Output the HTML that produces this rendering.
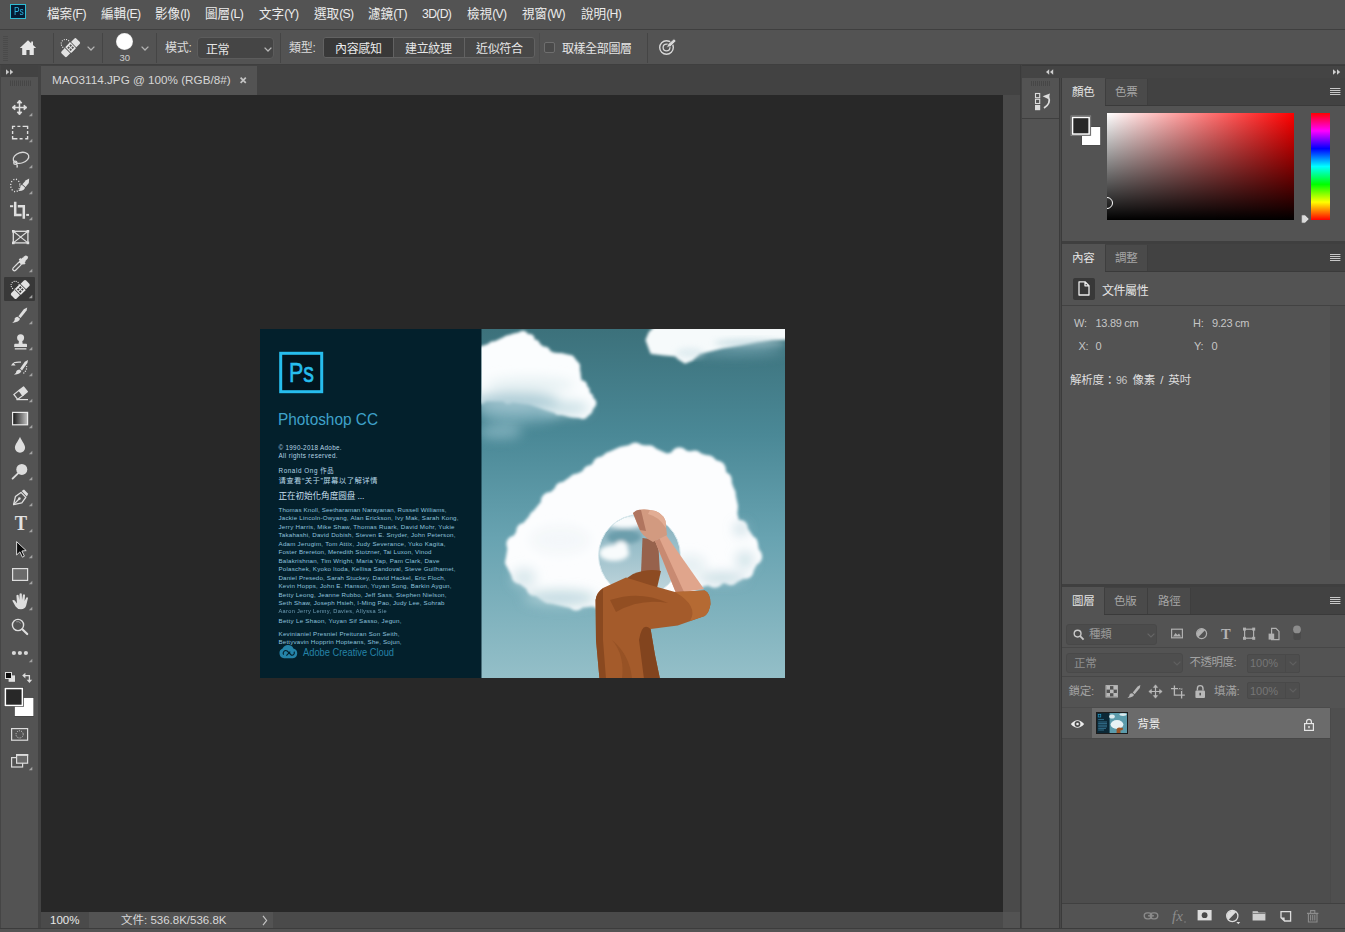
<!DOCTYPE html>
<html lang="zh-Hant">
<head>
<meta charset="utf-8">
<title>Photoshop</title>
<style>
*{box-sizing:border-box;margin:0;padding:0}
html,body{width:1345px;height:932px;overflow:hidden;background:#535353}
body{position:relative;font-family:"Liberation Sans","Noto Sans CJK TC",sans-serif;font-size:12px;color:#dcdcdc;line-height:1}
.a{position:absolute}
.t{position:absolute;white-space:nowrap;line-height:14px;height:14px}
svg{position:absolute;overflow:visible}
/* bars */
#menubar{left:0;top:0;width:1345px;height:29px;background:#535353}
#menuline{left:0;top:29px;width:1345px;height:1px;background:#3f3f3f}
#optbar{left:0;top:30px;width:1345px;height:34px;background:#535353}
#optline{left:0;top:64px;width:1345px;height:1px;background:#3f3f3f}
.mi{top:7px;font-size:12.6px;color:#ececec}
.mi .l{font-size:12.2px;letter-spacing:-0.65px}
.vsep{position:absolute;width:1px;background:#454545;top:37px;height:22px}
/* left tools */
#tools{left:0;top:65px;width:38px;height:863px;background:#535353}
#toolshead{left:0;top:65px;width:38px;height:12px;background:#424242}
#toolsborder{left:38px;top:65px;width:3px;height:863px;background:#434343}
/* document */
#tabbar{left:41px;top:65px;width:979px;height:30px;background:#424242}
#tab{left:41px;top:66px;width:216px;height:29px;background:#535353}
#canvas{left:41px;top:95px;width:962px;height:817px;background:#282828}
#vscroll{left:1003px;top:95px;width:17px;height:817px;background:#4a4a4a}
#status{left:41px;top:912px;width:979px;height:16px;background:#4a4a4a}
.pt{font-size:11.5px;color:#e4e4e4;letter-spacing:-0.3px}
.pti{font-size:11.5px;color:#a6a6a6;letter-spacing:-0.3px}
.lbl{font-size:11px;color:#c6c6c6;letter-spacing:-0.3px}
#bottomline{left:0;top:928px;width:1345px;height:1px;background:#3c3c3c}
</style>
</head>
<body>
<!-- MENU BAR -->
<div class="a" id="menubar"></div>
<div class="a" id="menuline"></div>
<div class="a" style="left:10px;top:4px;width:16px;height:15px;background:#041c34;border:1px solid #2fbcd4"></div>
<div class="t" style="left:13.6px;top:4.6px;font-size:10.5px;color:#2fb8e0;line-height:13px;transform:scaleX(0.8);transform-origin:left center">Ps</div>
<div class="t mi" style="left:47px">檔案<span class="l">(F)</span></div>
<div class="t mi" style="left:101px">編輯<span class="l">(E)</span></div>
<div class="t mi" style="left:155px">影像<span class="l">(I)</span></div>
<div class="t mi" style="left:205px">圖層<span class="l">(L)</span></div>
<div class="t mi" style="left:259px">文字<span class="l">(Y)</span></div>
<div class="t mi" style="left:314px">選取<span class="l">(S)</span></div>
<div class="t mi" style="left:368px">濾鏡<span class="l">(T)</span></div>
<div class="t mi" style="left:422px"><span class="l">3D(D)</span></div>
<div class="t mi" style="left:467px">檢視<span class="l">(V)</span></div>
<div class="t mi" style="left:522px">視窗<span class="l">(W)</span></div>
<div class="t mi" style="left:581px">說明<span class="l">(H)</span></div>

<!-- OPTIONS BAR -->
<div class="a" id="optbar"></div>
<div class="a" id="optline"></div>
<!--OPT-START-->
<!-- gripper -->
<div class="a" style="left:3px;top:36px;width:5px;height:25px;background:repeating-linear-gradient(to bottom,#4a4a4a 0 1px,#535353 1px 2px)"></div>
<!-- home -->
<svg style="left:19px;top:39px" width="18" height="17" viewBox="0 0 18 17"><path d="M9 1.2 L0.8 9 H3.2 V16 H7.4 V11 H10.6 V16 H14.8 V9 H17.2 L14 6 V2.6 H12.2 V4.2 Z" fill="#e6e6e6"/></svg>
<div class="vsep" style="left:53px;top:33px;height:30px"></div>
<!-- healing brush icon -->
<svg style="left:58.5px;top:35.5px" width="22" height="22" viewBox="0 0 22 22">
<circle cx="6.6" cy="7.8" r="4.4" fill="none" stroke="#e6e6e6" stroke-width="1.1" stroke-dasharray="1 1.3"/>
<g transform="rotate(-45 11.5 11.5)"><rect x="1" y="7.9" width="21" height="7.6" rx="1.6" fill="#e2e2e2"/><rect x="7.2" y="7.4" width="8.6" height="8.6" fill="#535353"/><rect x="8" y="7.5" width="7" height="8.4" rx="0.6" fill="#e6e6e6"/><rect x="9.1" y="9.3" width="1.9" height="1.9" fill="#535353"/><rect x="12" y="9.3" width="1.9" height="1.9" fill="#535353"/><rect x="9.1" y="12.2" width="1.9" height="1.9" fill="#535353"/><rect x="12" y="12.2" width="1.9" height="1.9" fill="#535353"/></g>
</svg>
<svg style="left:87px;top:46px" width="8" height="5" viewBox="0 0 8 5"><path d="M0.6 0.6 L4 4 L7.4 0.6" fill="none" stroke="#b4b4b4" stroke-width="1.3"/></svg>
<div class="vsep" style="left:102px;top:33px;height:30px"></div>
<!-- brush preview -->
<div class="a" style="left:116px;top:32.5px;width:17px;height:17px;border-radius:50%;background:radial-gradient(circle,#fff 0 60%,rgba(255,255,255,.7) 78%,rgba(255,255,255,0) 98%)"></div>
<div class="t" style="left:119.5px;top:51.5px;font-size:9.5px;color:#d0d0d0;line-height:12px;height:12px">30</div>
<svg style="left:141px;top:46px" width="8" height="5" viewBox="0 0 8 5"><path d="M0.6 0.6 L4 4 L7.4 0.6" fill="none" stroke="#b4b4b4" stroke-width="1.3"/></svg>
<div class="vsep" style="left:156px;top:33px;height:30px"></div>
<div class="t" style="left:165px;top:41px;color:#dcdcdc;letter-spacing:-0.3px">模式:</div>
<div class="a" style="left:197px;top:37px;width:77px;height:22px;background:#454545;border:1px solid #5c5c5c;border-radius:4px"></div>
<div class="t" style="left:206px;top:43px;color:#e6e6e6;letter-spacing:-0.6px">正常</div>
<svg style="left:264px;top:47px" width="8" height="5" viewBox="0 0 8 5"><path d="M0.6 0.6 L4 4 L7.4 0.6" fill="none" stroke="#b8b8b8" stroke-width="1.3"/></svg>
<div class="vsep" style="left:280px;top:33px;height:30px"></div>
<div class="t" style="left:289px;top:41px;color:#dcdcdc;letter-spacing:-0.3px">類型:</div>
<!-- button group -->
<div class="a" style="left:323px;top:37px;width:212px;height:21px;background:#474747;border:1px solid #626262;border-radius:3px"></div>
<div class="a" style="left:324px;top:38px;width:69px;height:19px;background:#383838;border-radius:2px 0 0 2px"></div>
<div class="a" style="left:393px;top:38px;width:1px;height:19px;background:#626262"></div>
<div class="a" style="left:464px;top:38px;width:1px;height:19px;background:#626262"></div>
<div class="t" style="left:335px;top:42px;color:#eaeaea;letter-spacing:-0.35px">內容感知</div>
<div class="t" style="left:405px;top:42px;color:#e6e6e6;letter-spacing:-0.35px">建立紋理</div>
<div class="t" style="left:476px;top:42px;color:#e6e6e6;letter-spacing:-0.35px">近似符合</div>
<div class="vsep" style="left:539px;top:33px;height:30px;background:#4c4c4c"></div>
<div class="a" style="left:544px;top:42px;width:11px;height:11px;background:#4a4a4a;border:1px solid #6e6e6e;border-radius:2px"></div>
<div class="t" style="left:562px;top:42px;color:#e6e6e6;letter-spacing:-0.4px">取樣全部圖層</div>
<div class="vsep" style="left:647px;top:33px;height:30px"></div>
<!-- pressure icon -->
<svg style="left:658px;top:38px" width="20" height="18" viewBox="0 0 20 18">
<circle cx="8.5" cy="9.5" r="6.8" fill="none" stroke="#d8d8d8" stroke-width="1.4"/>
<circle cx="8.5" cy="9.5" r="3.4" fill="none" stroke="#d8d8d8" stroke-width="1.3"/>
<path d="M8.5 9.5 L10 6 L16 0.8 L18.2 3 L12.5 8.6 Z" fill="#d8d8d8" stroke="#535353" stroke-width="0.8"/>
</svg>
<!--OPT-END-->

<!-- LEFT TOOLS -->
<div class="a" id="tools"></div>
<div class="a" id="toolshead"></div>
<div class="a" id="toolsborder"></div>
<div class="a" style="left:0;top:65px;width:1px;height:863px;background:#454545"></div>
<!--TOOLS-START-->
<div class="a" style="left:4px;top:277px;width:31px;height:24px;background:#383838;border-radius:1px"></div>
<svg style="left:0;top:0" width="41" height="932" viewBox="0 0 41 932">
<g fill="#c8c8c8"><path d="M6 69.3 L9.2 72 L6 74.7Z"/><path d="M10 69.3 L13.2 72 L10 74.7Z"/></g>
<g stroke="#464646" stroke-width="1"><path d="M10.5 80.5V86M12.5 80.5V86M14.5 80.5V86M16.5 80.5V86M18.5 80.5V86M20.5 80.5V86M22.5 80.5V86M24.5 80.5V86M26.5 80.5V86M28.5 80.5V86M30.5 80.5V86"/></g>
<!-- corner triangles -->
<g fill="#a2a2a2" id="tri">
<path d="M32.3 112.8V116.3H28.8Z"/><path d="M32.3 138.8V142.3H28.8Z"/><path d="M32.3 164.8V168.3H28.8Z"/><path d="M32.3 190.8V194.3H28.8Z"/><path d="M32.3 216.8V220.3H28.8Z"/>
<path d="M32.3 268.8V272.3H28.8Z"/><path d="M32.3 294.8V298.3H28.8Z"/><path d="M32.3 320.8V324.3H28.8Z"/><path d="M32.3 346.8V350.3H28.8Z"/><path d="M32.3 372.8V376.3H28.8Z"/><path d="M32.3 398.8V402.3H28.8Z"/><path d="M32.3 424.8V428.3H28.8Z"/><path d="M32.3 450.8V454.3H28.8Z"/><path d="M32.3 476.8V480.3H28.8Z"/><path d="M32.3 502.8V506.3H28.8Z"/><path d="M32.3 528.8V532.3H28.8Z"/><path d="M32.3 554.8V558.3H28.8Z"/><path d="M32.3 580.8V584.3H28.8Z"/><path d="M32.3 606.8V610.3H28.8Z"/><path d="M32.3 658.8V662.3H28.8Z"/><path d="M32.3 766.8V770.3H28.8Z"/>
</g>
<!-- 0 move -->
<g stroke="#dedede" stroke-width="1.5" fill="#dedede" stroke-linejoin="round"><path d="M19.5 101.5V113.5M13.5 107.5H25.5" fill="none"/><path d="M19.5 100 L17 103H22Z M19.5 115 L17 112H22Z M12 107.5 L15 105V110Z M27 107.5 L24 105V110Z" stroke-width="0.8"/></g>
<!-- 1 marquee -->
<path d="M12.6 129V126.4H15.2 M17.4 126.4H20.4 M22.6 126.4H25.6 M25.2 126.4H27.6V129 M27.6 131V134 M27.6 136V138.7H25.2 M22.6 138.7H19.6 M17.4 138.7H14.8 M15.2 138.7H12.6V136 M12.6 134V131" fill="none" stroke="#dedede" stroke-width="1.4"/>
<!-- 2 lasso -->
<g fill="none" stroke="#d8d8d8" stroke-width="1.3"><ellipse cx="21" cy="157.8" rx="8" ry="5.2" transform="rotate(-18 21 157.8)"/><circle cx="15.3" cy="162.8" r="1.6"/><path d="M16.6 163.8 Q17.6 165.5 17 167.6"/></g>
<!-- 3 quick select -->
<ellipse cx="15.3" cy="185.4" rx="4.6" ry="6.2" fill="none" stroke="#e6e6e6" stroke-width="1.3" stroke-dasharray="1.1 1.75"/>
<path d="M29.2 178.4 L28.8 183 L25.6 187 L22.4 184.2 L26 180.2 Z" fill="#dedede"/><path d="M21.8 184.8 L25 187.6 Q24.4 191.4 18.2 191 Q20.4 189.4 20.2 187.6 Q20.6 185.6 21.8 184.8Z" fill="#dedede"/>
<!-- 4 crop -->
<g fill="none" stroke="#dedede"><path d="M10 206.2H13.2" stroke-width="2"/><path d="M15.2 201.7V214.9H21.6" stroke-width="2.5"/><path d="M17.8 206.2H23.8V218.8" stroke-width="2.5"/><path d="M26.2 214.9H29" stroke-width="2"/></g>
<!-- 5 frame -->
<g fill="none" stroke="#dedede" stroke-width="1.3"><rect x="13.3" y="231.3" width="14.6" height="11.6"/><path d="M13.3 231.3L27.9 242.9M27.9 231.3L13.3 242.9" stroke-width="1.1"/></g>
<g fill="#dedede"><rect x="12" y="230" width="2.6" height="2.6"/><rect x="26.6" y="230" width="2.6" height="2.6"/><rect x="12" y="241.6" width="2.6" height="2.6"/><rect x="26.6" y="241.6" width="2.6" height="2.6"/></g>
<!-- 6 eyedropper -->
<g transform="rotate(45 20.3 263.2)"><rect x="18.6" y="262.6" width="3.4" height="10.6" rx="1.7" fill="none" stroke="#dedede" stroke-width="1.2"/><rect x="16.6" y="259.4" width="7.4" height="2.4" fill="#dedede"/><rect x="17.9" y="257.6" width="4.8" height="5.6" fill="#dedede"/><rect x="18.2" y="253.2" width="4.2" height="6" rx="2.1" fill="#dedede"/></g>
<!-- 7 healing -->
<circle cx="15.2" cy="285.4" r="4.1" fill="none" stroke="#e6e6e6" stroke-width="1.1" stroke-dasharray="1 1.15"/>
<g transform="rotate(-45 20.3 289.5)"><rect x="9.8" y="285.7" width="21" height="7.6" rx="1.6" fill="#e2e2e2"/><rect x="16" y="285.2" width="8.6" height="8.6" fill="#383838"/><rect x="16.8" y="285.3" width="7" height="8.4" rx="0.6" fill="#e6e6e6"/><rect x="17.9" y="287.1" width="1.9" height="1.9" fill="#383838"/><rect x="20.8" y="287.1" width="1.9" height="1.9" fill="#383838"/><rect x="17.9" y="290" width="1.9" height="1.9" fill="#383838"/><rect x="20.8" y="290" width="1.9" height="1.9" fill="#383838"/></g>
<!-- 8 brush -->
<path d="M27.2 307.4 L26.6 310.6 L20.6 318 L18.4 316.2 L23.8 309.2 Z" fill="#dedede"/><path d="M17.6 316.8 L20 318.8 Q19.4 322 12.2 323 Q15.4 320.6 14.6 318.6 Q15.6 316.8 17.6 316.8Z" fill="#dedede"/>
<!-- 9 stamp -->
<g fill="#dedede"><circle cx="20.6" cy="337.8" r="3.5"/><path d="M19 340 H22.2 L22.6 343.8 H26 Q27 343.8 27 344.8 V347 H14.2 V344.8 Q14.2 343.8 15.2 343.8 H18.6Z"/><rect x="14.8" y="348.2" width="11.6" height="1.3"/></g>
<!-- 10 history brush -->
<path d="M28 360 L27.4 363 L22 370.4 L20 368.8 L24.8 361.8 Z" fill="#dedede"/><path d="M19.4 369.4 L21.4 371 Q20.8 374 14 374.8 Q16.8 372.8 16.4 371 Q17.4 369.4 19.4 369.4Z" fill="#dedede"/>
<path d="M11 365.4 L15.6 365.4 L13.3 362.6Z" fill="#dedede"/><path d="M14 362.8 Q17 361.8 21 362.2" fill="none" stroke="#dedede" stroke-width="1.2"/>
<g fill="#dedede"><circle cx="26.6" cy="366.6" r="0.7"/><circle cx="26.4" cy="369" r="0.7"/><circle cx="25.4" cy="371.2" r="0.7"/><circle cx="23.8" cy="373" r="0.7"/></g>
<!-- 11 eraser -->
<g transform="rotate(-38 20.5 393.4)"><rect x="14.6" y="390.2" width="6.6" height="6.2" fill="none" stroke="#dedede" stroke-width="1.2"/><rect x="20.6" y="389.6" width="7" height="7.4" rx="0.8" fill="#dedede"/></g><path d="M16.4 399.6H28" stroke="#dedede" stroke-width="1.2"/>
<!-- 12 gradient -->
<defs><linearGradient id="gr1" x1="0" x2="1" y1="0" y2="0"><stop offset="0" stop-color="#161616"/><stop offset="1" stop-color="#c4c4c4"/></linearGradient></defs>
<rect x="12.6" y="412.4" width="15" height="12.4" fill="url(#gr1)" stroke="#ececec" stroke-width="1.2"/>
<!-- 13 blur -->
<path d="M20 436.8 C19 440 14.9 444.4 14.9 447.6 A5.1 5.1 0 0 0 25.1 447.6 C25.1 444.4 21 440 20 436.8Z" fill="#dedede"/>
<!-- 14 dodge -->
<circle cx="21.8" cy="469.4" r="5.5" fill="#dcdcdc"/><path d="M18 473.4L12.6 478.6" stroke="#dcdcdc" stroke-width="1.9" stroke-linecap="round"/>
<!-- 15 pen -->
<g fill="none" stroke="#dedede" stroke-width="1.3" stroke-linejoin="round"><path d="M13.6 504.6 L15.4 496.6 L21 492.4 L25.8 497.4 L21.8 502.8 Z"/><path d="M13.8 504.4 L19 499"/></g><circle cx="19.4" cy="498.6" r="1.3" fill="#dedede"/><path d="M21.6 491 L24 489.4 L28.2 493.8 L26.8 496.4 Z" fill="#dedede"/>
<!-- 16 type -->
<text x="21" y="530.2" text-anchor="middle" font-family="Liberation Serif,serif" font-weight="bold" font-size="21" fill="#e2e2e2" transform="translate(21 0) scale(0.88 1) translate(-21 0)">T</text>
<!-- 17 path select -->
<path d="M16.6 541.6 V555 L19.9 551.9 L22.4 557.2 L24.4 556.2 L21.9 551 L26.2 550.6 Z" fill="#0c0c0c" stroke="#d8d8d8" stroke-width="1" stroke-linejoin="round"/>
<!-- 18 rectangle -->
<rect x="12.6" y="568.6" width="15" height="11.8" fill="#6a6a6a" stroke="#dedede" stroke-width="1.2"/>
<!-- 19 hand -->
<g fill="#dedede"><path d="M12.2 600.6 Q13.4 599.4 14.8 600.6 L17 603.4 L16.4 595.4 Q17.4 594 18.6 595.2 L19.2 600 L19.6 593.8 Q20.8 592.6 21.8 593.8 L22 600 L23 594.8 Q24.2 593.8 25 595 L24.6 601 L26.4 597.4 Q27.6 596.8 28 598 L26.2 605.4 Q25 609.2 21 609.2 Q17.4 609.2 15.6 606.4 Z"/></g>
<!-- 20 zoom -->
<circle cx="18" cy="625" r="5.6" fill="none" stroke="#dedede" stroke-width="1.4"/><path d="M22.3 629.3 L27.2 634" stroke="#dedede" stroke-width="2.2" stroke-linecap="round"/><path d="M16.2 621.8 Q19 620.8 20.8 623.4" fill="none" stroke="#9a9a9a" stroke-width="0.9"/>
<!-- 21 dots -->
<g fill="#d8d8d8"><circle cx="13.9" cy="653" r="2.1"/><circle cx="19.9" cy="653" r="2.1"/><circle cx="25.9" cy="653" r="2.1"/></g>
<!-- default colours / swap -->
<rect x="8.6" y="675.4" width="6.4" height="6.4" fill="#e0e0e0"/><rect x="5.5" y="672.5" width="6" height="6" fill="#0c0c0c" stroke="#dcdcdc" stroke-width="1"/>
<g fill="#dcdcdc"><path d="M22.2 675.6 L25.4 672.8 V678.4Z"/><path d="M29.4 683 L26.6 679.8 H32.2Z"/></g><path d="M25 675.6 H29.4 V680" fill="none" stroke="#dcdcdc" stroke-width="1.3"/>
<!-- fg / bg -->
<rect x="14.2" y="697.3" width="19.8" height="19.3" fill="#404040"/><rect x="14.8" y="697.9" width="18.6" height="18.1" fill="#ffffff"/>
<rect x="4" y="687.2" width="19.8" height="19.6" fill="#3c3c3c"/><rect x="4.6" y="687.8" width="18.5" height="18.4" fill="#ffffff"/><rect x="6.1" y="689.3" width="15.5" height="15.4" fill="#282828"/>
<!-- quick mask -->
<rect x="11.6" y="728.6" width="16" height="11.6" fill="none" stroke="#dcdcdc" stroke-width="1.2"/><circle cx="19.6" cy="734.4" r="3.6" fill="none" stroke="#e6e6e6" stroke-width="1" stroke-dasharray="0.9 1.36"/>
<!-- screen mode -->
<rect x="11.6" y="757.6" width="11" height="9.4" fill="#535353" stroke="#dcdcdc" stroke-width="1.2"/><rect x="16.6" y="754.8" width="11" height="8.4" fill="#6a6a6a" stroke="#dcdcdc" stroke-width="1.2"/><rect x="16" y="754" width="12.2" height="1.8" fill="#dcdcdc"/>
</svg>
<!--TOOLS-END-->

<!-- DOCUMENT AREA -->
<div class="a" id="tabbar"></div>
<div class="a" id="tab"></div>
<div class="t" style="left:52px;top:73px;font-size:11.7px;color:#d6d6d6">MAO3114.JPG @ 100% (RGB/8#)</div>
<div class="a" id="canvas"></div>
<div class="a" id="vscroll"></div>
<div class="a" id="status"></div>
<!--DOC-START-->
<!-- tab close -->
<svg style="left:240px;top:77px" width="7" height="7" viewBox="0 0 7 7"><path d="M0.6 0.6L5.8 5.8M5.8 0.6L0.6 5.8" stroke="#c4c4c4" stroke-width="1.7"/></svg>
<!-- status bar -->
<div class="a" style="left:89px;top:912px;width:184px;height:16px;background:#535353"></div>
<div class="a" style="left:1003px;top:912px;width:17px;height:16px;background:#535353"></div>
<div class="t" style="left:50px;top:913px;font-size:11.5px;color:#e8e8e8">100%</div>
<div class="t" style="left:121px;top:913px;font-size:11.5px;color:#d8d8d8">文件: 536.8K/536.8K</div>
<svg style="left:262px;top:915px" width="6" height="11" viewBox="0 0 6 11"><path d="M1 0.8L4.6 5.5L1 10.2" fill="none" stroke="#c4c4c4" stroke-width="1.2"/></svg>
<!-- document image -->
<svg style="left:260px;top:329px" width="525" height="349" viewBox="260 329 525 349">
<defs>
<linearGradient id="sky" x1="0" x2="0" y1="329" y2="678" gradientUnits="userSpaceOnUse"><stop offset="0" stop-color="#3c717b"/><stop offset="0.3" stop-color="#4a8896"/><stop offset="0.6" stop-color="#68a3b1"/><stop offset="1" stop-color="#94bfc8"/></linearGradient>
<linearGradient id="mir" x1="0" x2="0" y1="515" y2="595" gradientUnits="userSpaceOnUse"><stop offset="0" stop-color="#84afbc"/><stop offset="0.45" stop-color="#9cc0cb"/><stop offset="1" stop-color="#c2d7dd"/></linearGradient>
<filter id="b2" x="-20%" y="-20%" width="140%" height="140%"><feGaussianBlur stdDeviation="2"/></filter>
<filter id="b3" x="-20%" y="-20%" width="140%" height="140%"><feGaussianBlur stdDeviation="3.2"/></filter>
<filter id="b6" x="-30%" y="-30%" width="160%" height="160%"><feGaussianBlur stdDeviation="6"/></filter>
<filter id="b25" x="-20%" y="-20%" width="140%" height="140%"><feGaussianBlur stdDeviation="2.4"/></filter>
<filter id="b15" x="-20%" y="-20%" width="140%" height="140%"><feGaussianBlur stdDeviation="1.6"/></filter>
<filter id="b1" x="-20%" y="-20%" width="140%" height="140%"><feGaussianBlur stdDeviation="0.7"/></filter>
<clipPath id="imgclip"><rect x="260" y="329" width="525" height="349"/></clipPath>
<clipPath id="photoclip"><rect x="481.5" y="329" width="303.5" height="349"/></clipPath>
<clipPath id="mirclip"><circle cx="639.5" cy="555.5" r="40.5"/></clipPath>
</defs>
<g clip-path="url(#imgclip)">
<rect x="260" y="329" width="222" height="349" fill="#03202c"/>
<rect x="481.5" y="329" width="304" height="349" fill="url(#sky)"/>
<g clip-path="url(#photoclip)"><!--PHOTO-START-->
<!-- cloud shadows -->
<g filter="url(#b6)" opacity="0.8"><ellipse cx="520" cy="412" rx="42" ry="12" fill="#7fb0bd"/><ellipse cx="500" cy="432" rx="22" ry="7" fill="#8ab8c4"/><ellipse cx="735" cy="350" rx="50" ry="6" fill="#6fa0ad"/></g>
<!-- top-left cloud -->
<g filter="url(#b15)"><path d="M478 349 L490 345 L505 338 L514 335 L521 333.5 L528 336 L534 341 L544 349 L553 354 L563 355 L572 357 L578 365 L579 373 L580 381 L585 387 L588 392 L592 399 L593.5 405 L590 412 L585 417 L572 416 L560 413 L545 408 L530 403 L505 400 L478 400 Z" fill="#fbfdfe" stroke="#fbfdfe" stroke-width="3" stroke-linejoin="round"/><g fill="#fbfdfe"><circle cx="481.3" cy="350.2" r="4.0"/><circle cx="493.1" cy="346.6" r="5.4"/><circle cx="507.7" cy="340.3" r="4.8"/><circle cx="516.3" cy="337.7" r="4.2"/><circle cx="522.9" cy="336.4" r="5.6"/><circle cx="529.6" cy="339.1" r="5.0"/><circle cx="535.4" cy="344.2" r="4.4"/><circle cx="544.6" cy="352.4" r="5.8"/><circle cx="552.3" cy="357.4" r="5.2"/><circle cx="561.0" cy="357.9" r="4.6"/><circle cx="569.3" cy="359.2" r="4.0"/><circle cx="574.7" cy="366.2" r="5.4"/><circle cx="575.5" cy="373.3" r="4.8"/><circle cx="576.6" cy="380.4" r="4.2"/><circle cx="581.7" cy="385.9" r="5.6"/><circle cx="584.8" cy="390.7" r="5.0"/><circle cx="588.9" cy="397.3" r="4.4"/><circle cx="590.6" cy="403.1" r="5.8"/><circle cx="587.4" cy="409.7" r="5.2"/><circle cx="582.7" cy="414.4" r="4.6"/><circle cx="570.2" cy="413.0" r="4.0"/><circle cx="559.0" cy="409.7" r="5.4"/><circle cx="545.4" cy="404.5" r="4.8"/><circle cx="532.0" cy="400.1" r="4.2"/><circle cx="508.1" cy="398.3" r="5.6"/><circle cx="481.3" cy="398.9" r="5.0"/></g></g>
<g filter="url(#b6)"><ellipse cx="515" cy="402" rx="45" ry="10" fill="#a3c7d1" opacity="0.85"/><ellipse cx="565" cy="408" rx="24" ry="7" fill="#b9d5dd" opacity="0.7"/><ellipse cx="530" cy="385" rx="45" ry="8" fill="#dfecf0" opacity="0.7"/></g>
<!-- top-right cloud -->
<g filter="url(#b15)"><path d="M647 340 L650 333 L655 328 L790 328 L790 338 L772 339 L756.6 341 L740 344 L722 347 L710 350 L699 352.6 L692 359 L685 362 L679 358 L676 355 L664 354 L651.7 352.6 Z" fill="#f6fafb" stroke="#f6fafb" stroke-width="3" stroke-linejoin="round"/></g>
<g filter="url(#b3)" opacity="0.6"><ellipse cx="750" cy="343" rx="36" ry="4" fill="#b5d2da"/><ellipse cx="690" cy="353" rx="14" ry="5" fill="#d2e4ea"/></g>
<!-- big cloud -->
<g filter="url(#b15)"><path d="M507 563 L510 545 L519 531 L531 517 L545 500 L558 488 L572 478 L587.5 471 L598 461 L608 454.6 L620 449 L635 446 L650 448 L666.6 455.6 L682 452 L698 454.6 L712 459 L720.8 467 L728 478 L733 492 L736 506 L735 519 L745 528 L756 544 L758 558 L750 573 L735 581 L718.6 581.6 L700 585 L690 592 L600 600 L596 604 L573 606.6 L545 600 L531 590 L515 578 Z" fill="#fcfdfe" stroke="#fcfdfe" stroke-width="4" stroke-linejoin="round"/><g fill="#fcfdfe"><circle cx="511.8" cy="561.5" r="6.4"/><circle cx="514.9" cy="544.1" r="8.6"/><circle cx="524.0" cy="530.6" r="7.7"/><circle cx="536.0" cy="517.2" r="6.7"/><circle cx="549.9" cy="501.1" r="9.0"/><circle cx="562.6" cy="489.9" r="8.0"/><circle cx="576.2" cy="480.7" r="7.0"/><circle cx="591.1" cy="474.4" r="9.3"/><circle cx="600.9" cy="465.1" r="8.3"/><circle cx="610.2" cy="459.1" r="7.4"/><circle cx="621.4" cy="453.8" r="6.4"/><circle cx="635.4" cy="451.0" r="8.6"/><circle cx="649.4" cy="453.0" r="7.7"/><circle cx="664.8" cy="460.2" r="6.7"/><circle cx="679.4" cy="456.3" r="9.0"/><circle cx="694.7" cy="458.4" r="8.0"/><circle cx="708.2" cy="462.3" r="7.0"/><circle cx="716.7" cy="469.8" r="9.3"/><circle cx="723.5" cy="480.2" r="8.3"/><circle cx="728.2" cy="493.5" r="7.4"/><circle cx="731.1" cy="506.8" r="6.4"/><circle cx="730.0" cy="519.1" r="8.6"/><circle cx="740.0" cy="527.7" r="7.7"/><circle cx="751.1" cy="543.0" r="6.7"/><circle cx="753.2" cy="556.5" r="9.0"/><circle cx="745.5" cy="570.9" r="8.0"/><circle cx="730.8" cy="578.3" r="7.0"/><circle cx="714.7" cy="578.5" r="9.3"/><circle cx="696.6" cy="581.3" r="8.3"/><circle cx="687.1" cy="587.9" r="7.4"/><circle cx="602.3" cy="595.6" r="6.4"/><circle cx="598.4" cy="599.6" r="8.6"/><circle cx="576.1" cy="602.7" r="7.7"/><circle cx="548.9" cy="596.8" r="6.7"/><circle cx="535.2" cy="587.3" r="9.0"/><circle cx="519.6" cy="575.9" r="8.0"/></g></g>
<g filter="url(#b6)"><ellipse cx="560" cy="598" rx="36" ry="8" fill="#b4d2da" opacity="0.75"/><ellipse cx="524" cy="578" rx="12" ry="10" fill="#c5dce3" opacity="0.6"/><ellipse cx="722" cy="578" rx="24" ry="5" fill="#a9cbd4" opacity="0.7"/><ellipse cx="741" cy="529" rx="7" ry="6" fill="#a8cad3" opacity="0.6"/><ellipse cx="745" cy="560" rx="9" ry="9" fill="#c2dae1" opacity="0.7"/><ellipse cx="690" cy="565" rx="16" ry="10" fill="#dde9ee" opacity="0.7"/><ellipse cx="560" cy="540" rx="30" ry="14" fill="#eef4f6" opacity="0.6"/></g>
<!-- mirror -->
<circle cx="639.5" cy="555.5" r="41" fill="url(#mir)" stroke="#dbeaee" stroke-width="1"/>
<g clip-path="url(#mirclip)"><g filter="url(#b2)"><ellipse cx="624" cy="537" rx="17" ry="7" fill="#6c9eac"/><g fill="#f8fbfc"><ellipse cx="614" cy="553" rx="15" ry="8"/><circle cx="621" cy="548" r="7"/><ellipse cx="625" cy="521" rx="24" ry="7"/></g></g></g>
<!-- far forearm (shadow) -->
<path d="M641 573 L642.5 538 L658 540 L660 573 Z" fill="#97624c"/>
<!-- far sleeve -->
<path d="M606 592 L633 574 Q648 568 661 571 L657 588 L640 604 Z" fill="#8d4b22"/>
<!-- near forearm -->
<path d="M655 541 L666 535 L704 589 L676 593 Z" fill="#e0a58c"/><path d="M655 541 L659.5 538.6 L684 592 L676 593 Z" fill="#c88a72"/>
<!-- hands -->
<path d="M633 513 Q640 507.5 650 510 Q662 511 665.5 521 L667 535 L653 542 Q641 536 638 526 Z" fill="#d29a80"/><path d="M633 513 Q637 509 641 510 L646 531 L640 530 Z" fill="#b0755f"/><path d="M650 510 Q662 511 665.5 521 L666 528 Q658 516 648 514Z" fill="#e2ad94"/>
<!-- shirt -->
<path d="M599.5 679 L596 640 L595.6 600 Q596.5 592 603 588 L626 577.5 L650 585 L675 592 L704.7 590.5 Q710.5 593 710.5 604 Q709 613 704.7 616 L677.7 625.5 L650.6 629 L655 655 L660 679 Z" fill="#a45b2b"/>
<path d="M650.6 629 L655 655 L660 679 L644 679 L639 640 Q642 621 650.6 629Z" fill="#82441e"/><path d="M596 640 L595.6 600 Q596.5 593 603 588.5 L603 640 L606 679 L599.5 679Z" fill="#8a4920"/>
<path d="M675 592 L704.7 590.5 Q710.5 593 710.5 604 Q709 613 704.7 616 L690 621 Q699 606 675 592Z" fill="#b56a33"/><path d="M610 600 Q640 590 668 603 Q640 598 616 612Z" fill="#8a4920" opacity="0.7"/><path d="M612 640 Q625 655 622 679 L632 679 Q630 655 612 640Z" fill="#8a4920" opacity="0.5"/>
<!--PHOTO-END--></g>
<!--SPLASH-START-->
<rect x="280.7" y="353.3" width="41" height="38.4" fill="#02141e" stroke="#27bdee" stroke-width="3"/>
<text x="289" y="382.3" font-family="Liberation Sans,sans-serif" font-size="28" fill="#27bdee" stroke="#27bdee" stroke-width="0.6" textLength="25" lengthAdjust="spacingAndGlyphs">Ps</text>
<text x="278" y="424.5" font-family="Liberation Sans,sans-serif" font-size="17" fill="#3fa2ca" textLength="100" lengthAdjust="spacingAndGlyphs">Photoshop CC</text>
<g font-family="Liberation Sans,Noto Sans CJK SC,sans-serif" font-size="6.3" fill="#b7d6e6">
<text x="278.5" y="450" textLength="63">© 1990-2018 Adobe.</text>
<text x="278.5" y="458" textLength="59">All rights reserved.</text>
<text x="278.5" y="473" textLength="55">Ronald Ong 作品</text>
<text x="278.5" y="483" font-size="7.4" textLength="99">请查看“关于”屏幕以了解详情</text>
<text x="278.5" y="499" font-size="8.6" fill="#c6dfec" textLength="86">正在初始化角度圆盘 ...</text>
</g>
<g font-family="Liberation Sans,sans-serif" font-size="6.2" fill="#8fc3df">
<text x="278.5" y="511.6" textLength="168">Thomas Knoll, Seetharaman Narayanan, Russell Williams,</text>
<text x="278.5" y="520.1" textLength="180">Jackie Lincoln-Owyang, Alan Erickson, Ivy Mak, Sarah Kong,</text>
<text x="278.5" y="528.6" textLength="176">Jerry Harris, Mike Shaw, Thomas Ruark, David Mohr, Yukie</text>
<text x="278.5" y="537.1" textLength="177">Takahashi, David Dobish, Steven E. Snyder, John Peterson,</text>
<text x="278.5" y="545.6" textLength="167">Adam Jerugim, Tom Attix, Judy Severance, Yuko Kagita,</text>
<text x="278.5" y="554.1" textLength="153">Foster Brereton, Meredith Stotzner, Tai Luxon, Vinod</text>
<text x="278.5" y="562.6" textLength="161">Balakrishnan, Tim Wright, Maria Yap, Pam Clark, Dave</text>
<text x="278.5" y="571.1" textLength="177">Polaschek, Kyoko Itoda, Kellisa Sandoval, Steve Guilhamet,</text>
<text x="278.5" y="579.6" textLength="167">Daniel Presedo, Sarah Stuckey, David Hackel, Eric Floch,</text>
<text x="278.5" y="588.1" textLength="173">Kevin Hopps, John E. Hanson, Yuyan Song, Barkin Aygun,</text>
<text x="278.5" y="596.6" textLength="168">Betty Leong, Jeanne Rubbo, Jeff Sass, Stephen Nielson,</text>
<text x="278.5" y="605.1" textLength="166">Seth Shaw, Joseph Hsieh, I-Ming Pao, Judy Lee, Sohrab</text>
<text x="278.5" y="613.4" textLength="108" opacity="0.75" font-size="5.6">Aaron Jerry Lenny, Davies, Allyssa Sie</text>
<text x="278.5" y="622.6" textLength="123">Betty Le Shaon, Yuyan Sif Sasso, Jegun,</text>
<text x="278.5" y="635.8" textLength="121">Kevinianiel Presniel Preituran Son Seith,</text>
<text x="278.5" y="643.8" textLength="123">Bettyvavin Hopprin Hopteans, She, Sojun,</text>
</g>
<path d="M284 658.2 A5 5 0 0 1 282.6 648.6 A6 6 0 0 1 293.4 648.4 A5 5 0 0 1 293 658.2 Z" fill="#2583a8"/><g fill="none" stroke="#03202c" stroke-width="1.1"><path d="M283.6 654.6 A2.6 2.6 0 0 1 287.2 651 L291.4 655.2 A2.4 2.4 0 0 0 294 651.6"/><path d="M286.4 655.6 L290.2 651.6"/></g>
<text x="303" y="656" font-family="Liberation Sans,sans-serif" font-size="10" fill="#2583a8" textLength="91" lengthAdjust="spacingAndGlyphs">Adobe Creative Cloud</text>
<!--SPLASH-END-->
</g>
</svg>
<!--DOC-END-->

<!-- RIGHT PANELS -->
<!--RIGHT-START-->
<!-- dividers and collapsed strip -->
<div class="a" style="left:1020px;top:65px;width:2px;height:863px;background:#424242;border-left:1px solid #3b3b3b"></div>
<div class="a" style="left:1022px;top:65px;width:323px;height:13px;background:#444444"></div>
<div class="a" style="left:1022px;top:65px;width:323px;height:1px;background:#3b3b3b"></div>
<div class="a" style="left:1022px;top:78px;width:37px;height:850px;background:#535353"></div>
<div class="a" style="left:1022px;top:118px;width:37px;height:1px;background:#3f3f3f"></div>
<div class="a" style="left:1059px;top:78px;width:3px;height:850px;background:#484848;border-left:1px solid #3b3b3b;border-right:1px solid #3b3b3b"></div>
<svg style="left:0;top:0" width="1345" height="130" viewBox="0 0 1345 130">
<g fill="#cfcfcf"><path d="M1049.2 69.3 L1046 72 L1049.2 74.7Z"/><path d="M1053.2 69.3 L1050 72 L1053.2 74.7Z"/><path d="M1333 69.3 L1336.2 72 L1333 74.7Z"/><path d="M1337 69.3 L1340.2 72 L1337 74.7Z"/></g>
<g stroke="#464646" stroke-width="1"><path d="M1031.5 81V86M1033.5 81V86M1035.5 81V86M1037.5 81V86M1039.5 81V86M1041.5 81V86M1043.5 81V86M1045.5 81V86M1047.5 81V86M1049.5 81V86"/></g>
<g fill="none" stroke="#dcdcdc" stroke-width="1.1"><rect x="1035.5" y="93.5" width="4.2" height="4.2"/><rect x="1035.5" y="99.3" width="4.2" height="4.2"/></g><rect x="1035" y="105" width="5.2" height="5.2" fill="#dcdcdc"/>
<path d="M1048.4 96.6 Q1051.4 103.2 1044 108" fill="none" stroke="#dcdcdc" stroke-width="1.7"/><path d="M1042.6 96.2 L1050 93.6 L1048.6 99.2Z" fill="#dcdcdc"/>
</svg>
<!-- COLOR PANEL -->
<div class="a" style="left:1062px;top:78px;width:283px;height:28px;background:#424242"></div>
<div class="a" style="left:1062px;top:105px;width:283px;height:1px;background:#3a3a3a"></div>
<div class="a" style="left:1105px;top:79px;width:43px;height:26px;background:#4a4a4a;border-left:1px solid #3e3e3e;border-right:1px solid #3e3e3e"></div>
<div class="a" style="left:1062px;top:78px;width:43px;height:28px;background:#535353"></div>
<div class="t pt" style="left:1072px;top:85px">顏色</div>
<div class="t pti" style="left:1115px;top:85px">色票</div>
<svg style="left:1329px;top:88px" width="12" height="8" viewBox="0 0 12 8"><path d="M1 0.5H11.4M1 2.5H11.4M1 4.5H11.4M1 6.5H11.4" stroke="#c8c8c8" stroke-width="1"/></svg>
<div class="a" style="left:1062px;top:106px;width:283px;height:135px;background:#535353"></div>
<svg style="left:1065px;top:110px" width="40" height="40" viewBox="1065 110 40 40"><rect x="1081.4" y="126.4" width="19.2" height="19" fill="#444"/><rect x="1082" y="127" width="18.2" height="18" fill="#fff"/><rect x="1070.6" y="115.5" width="20.5" height="20.5" fill="#8e8e8e"/><rect x="1071.4" y="116.3" width="18.9" height="18.9" fill="#333"/><rect x="1071.8" y="116.7" width="18.1" height="18.1" fill="#fff"/><rect x="1073.3" y="118.2" width="15.1" height="15.1" fill="#282828"/></svg>
<div class="a" style="left:1107px;top:113px;width:187px;height:107px;background:linear-gradient(to bottom,rgba(0,0,0,0),#000),linear-gradient(to right,#fff,#f00);overflow:hidden"><div class="a" style="left:-6px;top:83.5px;width:12px;height:12px;border-radius:50%;border:1.5px solid #fff"></div></div>
<div class="a" style="left:1311px;top:113px;width:19px;height:107px;background:linear-gradient(to bottom,#ff0000 0%,#ff00ff 16.7%,#0000ff 33.3%,#00ffff 50%,#00ff00 66.7%,#ffff00 83.3%,#ff0000 100%)"></div>
<svg style="left:1301px;top:214px" width="9" height="10" viewBox="0 0 9 10"><path d="M1.4 1 H4 L8 5 L4 9 H1.4 Q0.6 9 0.6 8 V2 Q0.6 1 1.4 1Z" fill="#dcdcdc" stroke="#666" stroke-width="0.6"/></svg>
<div class="a" style="left:1062px;top:241px;width:283px;height:3px;background:#3f3f3f"></div>
<!-- PROPERTIES PANEL -->
<div class="a" style="left:1062px;top:244px;width:283px;height:28px;background:#424242"></div>
<div class="a" style="left:1062px;top:271px;width:283px;height:1px;background:#3a3a3a"></div>
<div class="a" style="left:1105px;top:245px;width:43px;height:26px;background:#4a4a4a;border-left:1px solid #3e3e3e;border-right:1px solid #3e3e3e"></div>
<div class="a" style="left:1062px;top:244px;width:43px;height:28px;background:#535353"></div>
<div class="t pt" style="left:1072px;top:251px">內容</div>
<div class="t pti" style="left:1115px;top:251px">調整</div>
<svg style="left:1329px;top:254px" width="12" height="8" viewBox="0 0 12 8"><path d="M1 0.5H11.4M1 2.5H11.4M1 4.5H11.4M1 6.5H11.4" stroke="#c8c8c8" stroke-width="1"/></svg>
<div class="a" style="left:1062px;top:272px;width:283px;height:312px;background:#535353"></div>
<div class="a" style="left:1073px;top:278px;width:22px;height:22px;background:#383838;border-radius:2px"></div>
<svg style="left:1078px;top:281px" width="12" height="15" viewBox="0 0 12 15"><path d="M1 0.8 H7 L11 4.8 V14 H1 Z M7 0.8 V4.8 H11" fill="none" stroke="#ececec" stroke-width="1.3" stroke-linejoin="round"/></svg>
<div class="t" style="left:1102px;top:284px;font-size:12px;color:#e4e4e4;letter-spacing:-0.45px">文件屬性</div>
<div class="a" style="left:1062px;top:305px;width:283px;height:1px;background:#424242"></div>
<div class="a" style="left:1330px;top:306px;width:15px;height:254px;background:#4e4e4e"></div>
<div class="t lbl" style="left:1074px;top:316px">W:</div><div class="t lbl" style="left:1095.5px;top:316px">13.89 cm</div>
<div class="t lbl" style="left:1193px;top:316px">H:</div><div class="t lbl" style="left:1212px;top:316px">9.23 cm</div>
<div class="t lbl" style="left:1078.5px;top:339px">X:</div><div class="t lbl" style="left:1095.5px;top:339px">0</div>
<div class="t lbl" style="left:1194px;top:339px">Y:</div><div class="t lbl" style="left:1211.5px;top:339px">0</div>
<div class="t" style="left:1070px;top:373px;font-size:11.5px;color:#dedede;letter-spacing:-0.2px;word-spacing:2.2px">解析度<span style="letter-spacing:-5px">：</span><span style="font-size:10.5px;color:#c6c6c6;margin-left:5.5px">96</span> 像素 / 英吋</div>
<div class="a" style="left:1062px;top:584px;width:283px;height:3px;background:#3f3f3f"></div>
<!--LAYERS-START-->
<div class="a" style="left:1062px;top:587px;width:283px;height:28px;background:#424242"></div>
<div class="a" style="left:1062px;top:614px;width:283px;height:1px;background:#3a3a3a"></div>
<div class="a" style="left:1104px;top:588px;width:44px;height:26px;background:#4a4a4a;border-left:1px solid #3e3e3e;border-right:1px solid #3e3e3e"></div>
<div class="a" style="left:1148px;top:588px;width:43px;height:26px;background:#4a4a4a;border-right:1px solid #3e3e3e"></div>
<div class="a" style="left:1062px;top:587px;width:42px;height:28px;background:#535353"></div>
<div class="t pt" style="left:1072px;top:594px">圖層</div>
<div class="t pti" style="left:1114px;top:594px">色版</div>
<div class="t pti" style="left:1158px;top:594px">路徑</div>
<svg style="left:1329px;top:597px" width="12" height="8" viewBox="0 0 12 8"><path d="M1 0.5H11.4M1 2.5H11.4M1 4.5H11.4M1 6.5H11.4" stroke="#c8c8c8" stroke-width="1"/></svg>
<div class="a" style="left:1062px;top:615px;width:283px;height:93px;background:#535353"></div>
<!-- filter row -->
<div class="a" style="left:1066px;top:624px;width:91px;height:21px;background:#4c4c4c;border:1px solid #484848;border-radius:3px"></div>
<svg style="left:1073px;top:629px" width="12" height="12" viewBox="0 0 12 12"><circle cx="4.6" cy="4.6" r="3.4" fill="none" stroke="#c8c8c8" stroke-width="1.4"/><path d="M7.2 7.2L10.6 10.6" stroke="#c8c8c8" stroke-width="1.8"/></svg>
<div class="t" style="left:1089px;top:627px;font-size:11.5px;color:#999;letter-spacing:-0.3px">種類</div>
<svg style="left:1147px;top:633px" width="8" height="5" viewBox="0 0 8 5"><path d="M0.6 0.6 L4 4 L7.4 0.6" fill="none" stroke="#666" stroke-width="1.2"/></svg>
<svg style="left:1165px;top:620px" width="145" height="28" viewBox="1165 620 145 28">
<rect x="1171.6" y="629.2" width="10.8" height="8.6" fill="none" stroke="#b0b0b0" stroke-width="1.2"/><path d="M1173 636.4 L1175.6 633 L1177.4 635 L1179 633.6 L1181 636.4Z" fill="#b0b0b0"/>
<circle cx="1201.6" cy="633.6" r="5" fill="none" stroke="#b0b0b0" stroke-width="1.2"/><path d="M1198.2 637.2 A5 5 0 0 1 1205.2 630.1Z" fill="#b0b0b0"/>
<text x="1225.8" y="638.8" text-anchor="middle" font-family="Liberation Serif,serif" font-weight="bold" font-size="14.5" fill="#b4b4b4">T</text>
<rect x="1244.6" y="629.2" width="9" height="9" fill="none" stroke="#b0b0b0" stroke-width="1.2"/><g fill="#b0b0b0"><rect x="1243" y="627.6" width="3" height="3"/><rect x="1252.2" y="627.6" width="3" height="3"/><rect x="1243" y="636.8" width="3" height="3"/><rect x="1252.2" y="636.8" width="3" height="3"/></g>
<path d="M1271.6 628.4 H1276 L1279 631.4 V639.6 H1271.6Z" fill="none" stroke="#b0b0b0" stroke-width="1.2"/><rect x="1268.6" y="633.6" width="5.6" height="6" fill="#b0b0b0"/>
<rect x="1293.4" y="629" width="7.4" height="11" rx="2" fill="#4a4a4a"/><circle cx="1297" cy="629.4" r="3.9" fill="#8c8c8c"/>
</svg>
<div class="a" style="left:1062px;top:647px;width:283px;height:1px;background:#474747"></div>
<!-- blend row -->
<div class="a" style="left:1066px;top:653px;width:117px;height:20px;background:#4e4e4e;border:1px solid #494949;border-radius:3px"></div>
<div class="t" style="left:1074px;top:656px;font-size:11.5px;color:#8e8e8e;letter-spacing:-0.3px">正常</div>
<svg style="left:1173px;top:661px" width="8" height="5" viewBox="0 0 8 5"><path d="M0.6 0.6 L4 4 L7.4 0.6" fill="none" stroke="#606060" stroke-width="1.2"/></svg>
<div class="t" style="left:1189.5px;top:655px;font-size:11.5px;color:#a2a2a2;letter-spacing:-0.5px">不透明度:</div>
<div class="a" style="left:1247px;top:654px;width:53px;height:19px;background:#4e4e4e;border:1px solid #494949;border-radius:2px"></div>
<div class="a" style="left:1285px;top:655px;width:1px;height:17px;background:#494949"></div>
<div class="t" style="left:1250px;top:656px;font-size:11px;color:#767676">100%</div>
<svg style="left:1289px;top:661px" width="8" height="5" viewBox="0 0 8 5"><path d="M0.6 0.6 L4 4 L7.4 0.6" fill="none" stroke="#606060" stroke-width="1.2"/></svg>
<div class="a" style="left:1062px;top:676px;width:283px;height:1px;background:#474747"></div>
<!-- lock row -->
<div class="t" style="left:1068.5px;top:684px;font-size:11.5px;color:#a2a2a2;letter-spacing:-0.3px">鎖定:</div>
<svg style="left:1100px;top:680px" width="110" height="22" viewBox="1100 680 110 22">
<g fill="#b8b8b8"><rect x="1106" y="685.6" width="11.4" height="11.4" fill="none" stroke="#b8b8b8" stroke-width="1"/><rect x="1106.4" y="686" width="3.6" height="3.6"/><rect x="1113.4" y="686" width="3.6" height="3.6"/><rect x="1110" y="689.6" width="3.6" height="3.6"/><rect x="1106.4" y="693" width="3.6" height="3.6"/><rect x="1113.4" y="693" width="3.6" height="3.6"/></g>
<path d="M1140.4 685 L1139.8 688 L1134.6 694.2 L1132.8 692.6 L1137.6 686.4 Z" fill="#b8b8b8"/><path d="M1132.2 693.2 L1134 694.8 Q1133.4 697.4 1127.4 698 Q1130 696.2 1129.6 694.6 Q1130.4 693.2 1132.2 693.2Z" fill="#b8b8b8"/>
<g stroke="#b8b8b8" stroke-width="1.2" fill="#b8b8b8"><path d="M1155.5 686.4V696.6M1150.4 691.5H1160.6" fill="none"/><path d="M1155.5 684.8 L1153.4 687.4H1157.6Z M1155.5 698.2 L1153.4 695.6H1157.6Z M1148.8 691.5 L1151.4 689.4V693.6Z M1162.2 691.5 L1159.6 689.4V693.6Z" stroke-width="0.6"/></g>
<g fill="none" stroke="#b8b8b8" stroke-width="1.3"><path d="M1171 688.6H1181.6V698.4M1174.4 685.4V695.2H1184.8"/></g><path d="M1178 688.6H1181.6V692" stroke="#535353" stroke-width="1.4" stroke-dasharray="1.2 1.2" fill="none"/>
<rect x="1195.4" y="690.4" width="9.6" height="7.6" rx="1" fill="#b8b8b8"/><path d="M1197.4 690.4 V688.4 A2.8 2.8 0 0 1 1203 688.4 V690.4" fill="none" stroke="#b8b8b8" stroke-width="1.4"/><rect x="1199.4" y="692.8" width="1.6" height="2.6" fill="#535353"/>
</svg>
<div class="t" style="left:1214px;top:684px;font-size:11.5px;color:#a2a2a2;letter-spacing:-0.3px">填滿:</div>
<div class="a" style="left:1247px;top:682px;width:53px;height:17px;background:#4e4e4e;border:1px solid #494949;border-radius:2px"></div>
<div class="a" style="left:1285px;top:683px;width:1px;height:15px;background:#494949"></div>
<div class="t" style="left:1250px;top:684px;font-size:11px;color:#767676">100%</div>
<svg style="left:1289px;top:688px" width="8" height="5" viewBox="0 0 8 5"><path d="M0.6 0.6 L4 4 L7.4 0.6" fill="none" stroke="#606060" stroke-width="1.2"/></svg>
<!-- layer list -->
<div class="a" style="left:1062px;top:708px;width:268px;height:195px;background:#4d4d4d"></div>
<div class="a" style="left:1330px;top:708px;width:15px;height:195px;background:#4f4f4f;border-left:1px solid #4a4a4a"></div>
<div class="a" style="left:1062px;top:707px;width:268px;height:1px;background:#4b4b4b"></div>
<div class="a" style="left:1062px;top:708px;width:30px;height:30px;background:#535353"></div>
<div class="a" style="left:1092px;top:708px;width:238px;height:30px;background:#6b6b6b"></div>
<div class="a" style="left:1062px;top:738px;width:268px;height:1px;background:#474747"></div>
<svg style="left:1070px;top:717px" width="15" height="14" viewBox="0 0 15 14"><path d="M0.8 7 Q7.5 -0.6 14.2 7 Q7.5 14.6 0.8 7Z" fill="#ececec"/><circle cx="7.5" cy="7" r="2.9" fill="#4a4a4a"/><circle cx="7.5" cy="7" r="1.3" fill="#ececec"/></svg>
<svg style="left:1096px;top:712px" width="32" height="22" viewBox="0 0 32 22"><rect x="0.5" y="0.5" width="31" height="21" fill="#16384a" stroke="#1c1c1c" stroke-width="1"/><rect x="1" y="1" width="12.6" height="20" fill="#0c2836"/><rect x="13.6" y="1" width="17.4" height="20" fill="#5b9bab"/><ellipse cx="21" cy="12.5" rx="6.4" ry="4.4" fill="#e8f2f5"/><ellipse cx="16" cy="4.6" rx="2.8" ry="2" fill="#dcebef"/><ellipse cx="27" cy="2.6" rx="3.6" ry="1.4" fill="#dcebef"/><path d="M20.6 21 V17 Q21.4 15.4 23 15.4 L27 16 L26.6 18 L24.4 18.4 L24.6 21Z" fill="#9a5427"/><rect x="2.2" y="2.4" width="2.6" height="2.6" fill="none" stroke="#2aa6d4" stroke-width="0.6"/><path d="M2.2 7.6H8M2.2 10H11M2.2 11.6H11M2.2 13.2H11M2.2 14.8H11M2.2 16.4H10M2.2 18H8" stroke="#3b7f9f" stroke-width="0.8"/></svg>
<div class="t" style="left:1137.5px;top:717px;font-size:11.5px;color:#f0f0f0;letter-spacing:-0.3px">背景</div>
<svg style="left:1303px;top:718px" width="12" height="13" viewBox="0 0 12 13"><rect x="1.6" y="5.6" width="8.8" height="6.8" fill="none" stroke="#e6e6e6" stroke-width="1.2"/><path d="M3.6 5.6 V3.8 A2.4 2.4 0 0 1 8.4 3.8 V5.6" fill="none" stroke="#e6e6e6" stroke-width="1.2"/><rect x="5.3" y="8" width="1.4" height="2.2" fill="#e6e6e6"/></svg>
<!-- footer -->
<div class="a" style="left:1062px;top:903px;width:283px;height:1px;background:#404040"></div>
<div class="a" style="left:1062px;top:904px;width:283px;height:24px;background:#535353"></div>
<svg style="left:1140px;top:905px" width="185" height="22" viewBox="1140 905 185 22">
<g fill="none" stroke="#8c8c8c" stroke-width="1.3"><rect x="1144.2" y="912.8" width="7.6" height="6" rx="3"/><rect x="1150.2" y="912.8" width="7.6" height="6" rx="3"/><path d="M1148 915.8H1154"/></g>
<text x="1172" y="921" font-family="Liberation Serif,serif" font-style="italic" font-size="15" fill="#8c8c8c">fx</text><circle cx="1185" cy="922" r="0.7" fill="#8c8c8c"/>
<rect x="1197.6" y="910" width="14" height="10.4" fill="#dcdcdc"/><circle cx="1204.6" cy="915.2" r="2.9" fill="#484848"/>
<circle cx="1232.3" cy="916" r="5.6" fill="none" stroke="#dcdcdc" stroke-width="1.3"/><path d="M1228.4 920 A5.6 5.6 0 0 1 1236.2 912Z" fill="#dcdcdc"/><path d="M1236.4 922 H1240.2 L1238.3 924.2Z" fill="#dcdcdc"/>
<path d="M1252.6 911.2 H1257.6 L1258.6 912.4 H1265.4 V920.4 H1252.6Z" fill="#d0d0d0"/><path d="M1252.6 913.4H1265.4" stroke="#535353" stroke-width="0.7"/>
<path d="M1281 911.6 H1290.6 V921 H1284.6 L1281 917.6Z" fill="none" stroke="#dcdcdc" stroke-width="1.3"/><path d="M1281 917.6 H1284.6 V921Z" fill="#dcdcdc"/>
<g fill="none" stroke="#8c8c8c" stroke-width="1.1"><path d="M1308.4 913.6 H1317 V922 H1308.4Z M1307 913.4 H1318.4 M1310.6 913 V910.6 H1314.8 V913 M1310.6 915 V920.4 M1312.7 915 V920.4 M1314.8 915 V920.4"/></g>
</svg>
<!--LAYERS-END-->
<!--RIGHT-END-->

<div class="a" id="bottomline"></div>
</body>
</html>
